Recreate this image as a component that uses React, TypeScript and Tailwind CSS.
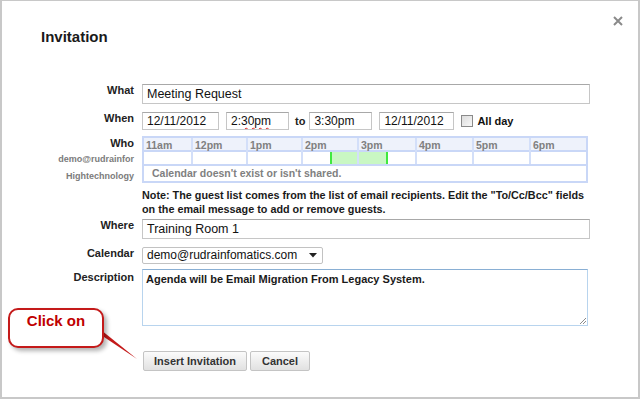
import React from 'react';

const hours = ['11am', '12pm', '1pm', '2pm', '3pm', '4pm', '5pm', '6pm'];

const Label: React.FC<{ children: React.ReactNode; className?: string }> = ({ children, className = '' }) => (
    <div className={`w-[132px] shrink-0 text-right text-[11px] font-bold leading-[13px] text-[#222] ${className}`}>{children}</div>
);

const Field: React.FC<{ children: React.ReactNode; className?: string }> = ({ children, className = '' }) => (
    <div className={`border border-[#c6c6c6] border-t-[#a8a8a8] bg-white px-[4px] text-[#111] whitespace-nowrap overflow-hidden ${className}`}>{children}</div>
);

export default function App() {
    return (
        <div className="relative w-[640px] h-[400px] bg-white font-['Liberation_Sans',Arial,sans-serif]">
            <div className="h-[399px] border-t border-l-2 border-r-2 border-b-2 border-[#c8c8c8]">
                {/* Header */}
                <div className="pt-[27px] pl-[39px] text-[15px] font-bold leading-[17px] text-[#1a1a1a]">Invitation</div>
                <svg className="absolute left-[613px] top-[16px]" width="10" height="10" viewBox="0 0 10 10">
                    <path d="M1 1 L9 9 M9 1 L1 9" stroke="#8a8a8a" strokeWidth="2" />
                </svg>

                {/* What */}
                <div className="flex items-start mt-[39px]">
                    <Label>What</Label>
                    <Field className="ml-2 w-[448px] h-[20px] text-[12.5px] leading-[18px]">Meeting Request</Field>
                </div>

                {/* When */}
                <div className="flex items-start mt-[8px]">
                    <Label>When</Label>
                    <div className="ml-2 flex items-center h-[18px]">
                        <Field className="w-[77px] h-[18px] text-[12px] leading-[16px]">12/11/2012</Field>
                        <Field className="ml-[7px] w-[63px] h-[18px] text-[12px] leading-[16px]">
                            2:<span className="underline decoration-wavy decoration-[#e02020] decoration-1 underline-offset-[2px]">30pm</span>
                        </Field>
                        <span className="ml-[6px] text-[11px] font-bold text-[#222]">to</span>
                        <Field className="ml-[4px] w-[63px] h-[18px] text-[12px] leading-[16px]">3:30pm</Field>
                        <Field className="ml-[7px] w-[75px] h-[18px] text-[12px] leading-[16px]">12/11/2012</Field>
                        <div className="ml-[7px] w-[12px] h-[12px] border border-[#8a8a8a] bg-linear-to-br from-[#dcdcdc] to-[#f8f8f8]" />
                        <span className="ml-[4px] text-[11px] font-bold text-[#111]">All day</span>
                    </div>
                </div>

                {/* Who */}
                <div className="flex items-start mt-[6px]">
                    <div className="w-[132px] shrink-0 text-right">
                        <div className="h-[16px] pt-[1px] text-[11px] font-bold leading-[13px] text-[#222]">Who</div>
                        <div className="h-[16px] flex items-center justify-end text-[9px] font-bold text-[#7b7b7b]">demo@rudrainfor</div>
                        <div className="h-[17px] flex items-center justify-end text-[9px] font-bold text-[#7b7b7b]">Hightechnology</div>
                    </div>
                    <div className="ml-2 w-[446px] border-2 border-[#c9d7f7] text-[10.5px] font-bold text-[#808080]">
                        <div className="grid grid-cols-[49px_55px_55px_56px_58px_57px_57px_1fr] h-[14px] bg-[#eef2fb] border-b-2 border-[#c9d7f7]">
                            {hours.map((h, i) => (
                                <div key={h} className={`pl-[2px] leading-[14px] ${i < 7 ? 'border-r-2 border-[#d3dff9]' : ''}`}>{h}</div>
                            ))}
                        </div>
                        <div className="relative grid grid-cols-[49px_55px_55px_56px_58px_57px_57px_1fr] h-[14px] border-b-2 border-[#c9d7f7]">
                            <div className="absolute left-[186px] top-0 bottom-0 w-[58px] bg-[#c9f7c3] border-x-2 border-dashed border-[#3fe83f]" />
                            {hours.map((h, i) => (
                                <div key={h} className={`relative ${i < 7 ? 'border-r-2 border-[#d3dff9]' : ''}`} />
                            ))}
                        </div>
                        <div className="h-[15px] pl-[8px] leading-[15px]">Calendar doesn't exist or isn't shared.</div>
                    </div>
                </div>

                {/* Note */}
                <div className="ml-[140px] mt-[3px] text-[10.8px] font-bold leading-[14px] text-[#1a1a1a] whitespace-nowrap">
                    Note: The guest list comes from the list of email recipients. Edit the "To/Cc/Bcc" fields
                    <br />
                    on the email message to add or remove guests.
                </div>

                {/* Where */}
                <div className="flex items-start mt-[3px]">
                    <Label>Where</Label>
                    <Field className="ml-2 w-[448px] h-[20px] text-[12.5px] leading-[18px]">Training Room 1</Field>
                </div>

                {/* Calendar */}
                <div className="flex items-start mt-[8px]">
                    <Label>Calendar</Label>
                    <div className="ml-2 w-[181px] h-[17px] flex items-center justify-between border border-[#c2c2c2] rounded-[2px] pl-[4px] pr-[5px] text-[12px] leading-[15px] text-[#111]">
                        <span>demo@rudrainfomatics.com</span>
                        <svg width="8" height="5" viewBox="0 0 8 5">
                            <path d="M0 0 L8 0 L4 4.5 Z" fill="#222" />
                        </svg>
                    </div>
                </div>

                {/* Description */}
                <div className="flex items-start mt-[5px]">
                    <Label className="pt-[2px]">Description</Label>
                    <div className="relative ml-2 w-[446px] h-[57px] border border-[#b8d4ee] border-t-[#89afd4] px-[3px] pt-[3px] text-[11px] font-bold leading-[13px] text-[#1a1a1a]">
                        Agenda will be Email Migration From Legacy System.
                        <svg className="absolute right-[1px] bottom-[1px]" width="7" height="7" viewBox="0 0 7 7">
                            <path d="M1 7 L7 1 M4 7 L7 4" stroke="#8c8c8c" strokeWidth="1" />
                        </svg>
                    </div>
                </div>

                {/* Buttons */}
                <div className="flex ml-[141px] mt-[25px] gap-[3px]">
                    <button className="w-[104px] h-[20px] border border-[#c4c4c4] rounded-[2px] bg-linear-to-b from-[#fbfbfb] to-[#e1e1e1] text-[11px] font-bold text-[#333]">Insert Invitation</button>
                    <button className="w-[60px] h-[20px] border border-[#c4c4c4] rounded-[2px] bg-linear-to-b from-[#fbfbfb] to-[#e1e1e1] text-[11px] font-bold text-[#333]">Cancel</button>
                </div>
            </div>

            {/* Callout */}
            <svg className="absolute left-[96px] top-[324px]" width="44" height="40" viewBox="0 0 44 40">
                <path d="M5 6 L41 35 L5 11 Z" fill="#c41a1a" />
            </svg>
            <div className="absolute left-[8px] top-[308px] w-[96px] h-[40px] border-2 border-[#c41a1a] rounded-[10px] bg-white shadow-[3px_3px_4px_rgba(0,0,0,0.3)] pt-[2px] text-center text-[15px] font-bold leading-[17px] text-[#c00000]">
                Click on
            </div>
        </div>
    );
}
